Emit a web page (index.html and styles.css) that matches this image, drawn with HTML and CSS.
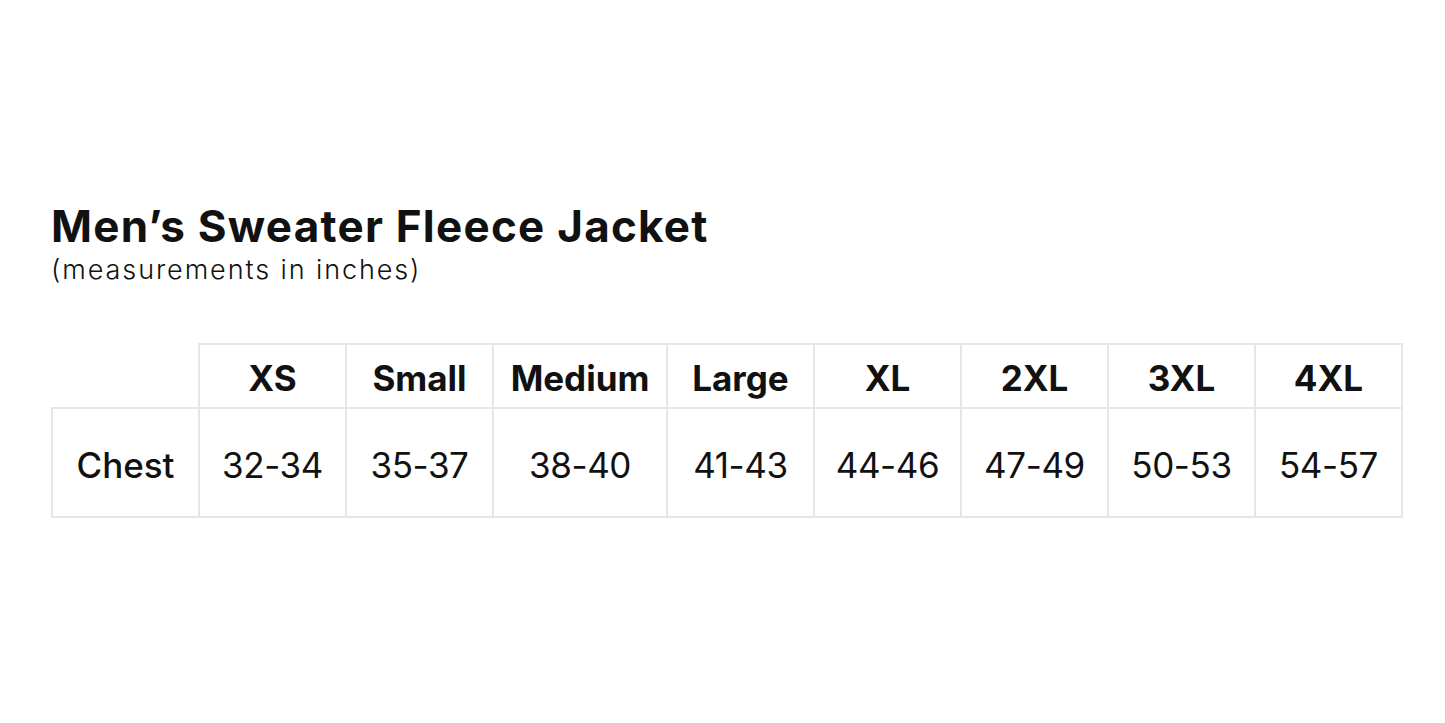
FILE: index.html
```html
<!DOCTYPE html>
<html>
<head>
<meta charset="utf-8">
<link rel="stylesheet" href="styles.css">
</head>
<body>
<main class="chart">
  <h1 class="title">Men’s Sweater Fleece Jacket</h1>
  <p class="subtitle">(measurements in inches)</p>
  <table class="sizes">
    <thead>
      <tr>
        <th class="blank"></th>
        <th>XS</th>
        <th>Small</th>
        <th class="wide">Medium</th>
        <th>Large</th>
        <th>XL</th>
        <th>2XL</th>
        <th>3XL</th>
        <th>4XL</th>
      </tr>
    </thead>
    <tbody>
      <tr>
        <td class="label">Chest</td>
        <td>32-34</td>
        <td>35-37</td>
        <td>38-40</td>
        <td>41-43</td>
        <td>44-46</td>
        <td>47-49</td>
        <td>50-53</td>
        <td>54-57</td>
      </tr>
    </tbody>
  </table>
</main>
</body>
</html>
```

FILE: styles.css
```css
html, body {
  margin: 0;
  padding: 0;
  background: #ffffff;
}

body {
  font-family: "Inter", "Open Sans", sans-serif;
  color: #111111;
}

.chart {
  padding: 198px 0 0 51px;
}

.title {
  margin: 0;
  font-size: 44px;
  font-weight: 700;
  line-height: 56px;
  letter-spacing: 1.25px;
}

.subtitle {
  margin: 0;
  font-size: 27px;
  line-height: 32px;
  font-weight: 300;
  letter-spacing: 1.9px;
}

.sizes {
  margin-top: 57px;
  border-collapse: collapse;
  table-layout: fixed;
  width: 1351px;
}

.sizes th,
.sizes td {
  border: 2px solid #e6e6e6;
  text-align: center;
  width: 145px;
  padding: 0;
}

.sizes th.wide {
  width: 172px;
}

.sizes th {
  height: 59px;
  padding-top: 3px;
  font-size: 35px;
  font-weight: 700;
}

.sizes th.blank {
  border-top-color: transparent;
  border-left-color: transparent;
}

.sizes td {
  height: 103px;
  padding-top: 4px;
  font-size: 35px;
  font-weight: 400;
  letter-spacing: -0.4px;
}

.sizes td.label {
  font-weight: 500;
  letter-spacing: 0;
}
```
